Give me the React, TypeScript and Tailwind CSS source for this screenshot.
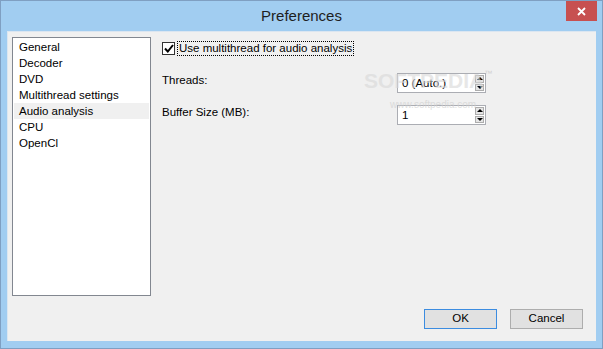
import React, { useState } from "react";

const items = ["General", "Decoder", "DVD", "Multithread settings", "Audio analysis", "CPU", "OpenCl"];

function SpinBox({ value }: { value: string }) {
  return (
    <div className="flex h-[20px] w-[89px] border border-[#abadb3] bg-white">
      <div className="flex-1 pl-[4px] text-[11.5px] leading-[18px] text-black">{value}</div>
      <div className="flex w-[9px] flex-col gap-px py-px mr-px">
        <div className="flex flex-1 items-center justify-center border border-[#adadad] bg-[#e5e5e5]">
          <div className="h-0 w-0 border-x-[3px] border-b-[3px] border-x-transparent border-b-black" />
        </div>
        <div className="flex flex-1 items-center justify-center border border-[#adadad] bg-[#e5e5e5]">
          <div className="h-0 w-0 border-x-[3px] border-t-[3px] border-x-transparent border-t-black" />
        </div>
      </div>
    </div>
  );
}

export default function App() {
  const [selected, setSelected] = useState(4);
  const [useMt, setUseMt] = useState(true);

  return (
    <div
      className="flex h-[349px] w-[603px] flex-col border border-[#7f9fc2] bg-[#a1cdf1] text-black"
      style={{ fontFamily: '"Liberation Sans", Arial, sans-serif' }}
    >
      {/* title bar */}
      <div className="relative flex h-[30px] shrink-0 items-center justify-center">
        <span className="text-[15px] leading-none text-[#1e1e1e] pb-[1px]">Preferences</span>
        <button className="absolute right-[5px] top-0 flex h-[20px] w-[31px] items-center justify-center bg-[#c75050]">
          <svg width="9" height="9" viewBox="0 0 9 9">
            <path d="M1 1 L8 8 M8 1 L1 8" stroke="white" strokeWidth="1.8" />
          </svg>
        </button>
      </div>

      {/* client area */}
      <div className="relative mx-[6px] flex h-[310px] flex-col border-l border-t border-[#dbe6f1] bg-[#f0f0f0] px-[4px] pt-[5px]">
        <div className="flex h-[259px] gap-[11px]">
          <div className="w-[139px] border border-[#828790] bg-white py-px">
            {items.map((it, i) => (
              <div
                key={it}
                onClick={() => setSelected(i)}
                className={
                  "mx-px h-[16px] pl-[5px] text-[11.5px] leading-[16px] " +
                  (i === selected ? "bg-[#f0f0f0]" : "")
                }
              >
                {it}
              </div>
            ))}
          </div>

          <div className="flex flex-1 flex-col pt-[4px]">
            <label className="flex h-[15px] items-center gap-[1px]">
              <span
                onClick={() => setUseMt(!useMt)}
                className="flex h-[13px] w-[13px] items-center justify-center border border-[#333] bg-white"
              >
                {useMt && (
                  <svg width="10" height="9" viewBox="0 0 10 9">
                    <path d="M1 4.5 L3.8 7.5 L9 1" fill="none" stroke="black" strokeWidth="2" />
                  </svg>
                )}
              </span>
              <span className="ml-[1px] border border-dotted border-black px-px text-[11.5px] leading-[13px]">
                Use multithread for audio analysis
              </span>
            </label>

            <div className="mt-[17px] flex items-start">
              <span className="w-[235px] text-[11.5px] leading-[15px]">Threads:</span>
              <SpinBox value="0 (Auto.)" />
            </div>
            <div className="mt-[12px] flex items-start">
              <span className="w-[235px] text-[11.5px] leading-[15px]">Buffer Size (MB):</span>
              <SpinBox value="1" />
            </div>
          </div>
        </div>

        <div className="mt-[13px] flex justify-end gap-[13px] pr-[9px]">
          <button className="h-[20px] w-[73px] border border-[#3c8ce0] bg-[#e1e1e1] text-[11.5px]">OK</button>
          <button className="h-[20px] w-[73px] border border-[#adadad] bg-[#e1e1e1] text-[11.5px]">Cancel</button>
        </div>

        {/* watermark */}
        <div className="pointer-events-none absolute left-[356px] top-[38px] select-none">
          <div className="flex items-start">
            <span className="text-[21px] font-bold leading-none text-[#d8d8d8] opacity-60">SOFTPEDIA</span>
            <span className="text-[8px] leading-none text-[#d0d0d0]">™</span>
          </div>
          <div className="ml-[26px] mt-[9px] text-[10px] leading-none text-[#d2d2d2] opacity-70">www.softpedia.com</div>
        </div>
      </div>
    </div>
  );
}
